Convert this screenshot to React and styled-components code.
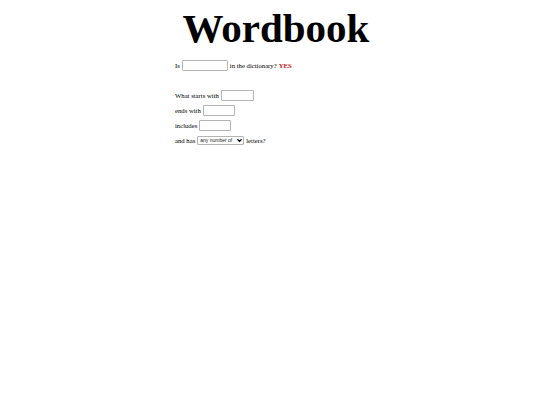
import React from "react";
import styled, { createGlobalStyle } from "styled-components";

const Global = createGlobalStyle`
  html, body {
    margin: 0;
    padding: 0;
    background: #fff;
  }
  body {
    font-family: "Liberation Serif", "Times New Roman", serif;
    color: #000;
  }
`;

const Page = styled.div`
  width: 190px;
  margin: 0 auto;
  font-size: 6.7px;
`;

const Title = styled.h1`
  margin: 0 -50px;
  padding: 4px 0 0 12px;
  font-size: 41px;
  line-height: 48px;
  font-weight: bold;
  text-align: center;
  white-space: nowrap;
`;

const Row = styled.div`
  display: flex;
  align-items: center;
  gap: 2px;
  height: 15px;
  margin-top: ${(p) => p.$top || 0}px;
`;

const Field = styled.input`
  box-sizing: border-box;
  width: ${(p) => p.$w || 46}px;
  height: 11px;
  border: 1px solid #b5b5b5;
  border-radius: 1px;
  padding: 0;
  margin: 0;
  font-size: 6.7px;
`;

const SelectWrap = styled.span`
  position: relative;
  display: inline-flex;
`;

const Select = styled.select`
  appearance: none;
  box-sizing: border-box;
  width: 47px;
  height: 9px;
  font-size: 5px;
  line-height: 7px;
  font-family: "Liberation Sans", Arial, sans-serif;
  color: #222;
  padding: 0 0 0 2px;
  margin: 0;
  background: #fff;
  border: 1px solid #b5b5b5;
  border-radius: 1px;
`;

const Chevron = styled.svg`
  position: absolute;
  right: 2px;
  top: 3px;
  width: 5px;
  height: 3px;
  pointer-events: none;
`;

const Yes = styled.span`
  color: #d01010;
  font-weight: bold;
`;

export default function App() {
  return (
    <>
      <Global />
      <Page>
        <Title>Wordbook</Title>
        <Row $top={6}>
          Is <Field /> in the dictionary? <Yes>YES</Yes>
        </Row>
        <Row $top={15}>
          What starts with <Field $w={33} />
        </Row>
        <Row>
          ends with <Field $w={32} />
        </Row>
        <Row>
          includes <Field $w={32} />
        </Row>
        <Row>
          and has
          <SelectWrap>
            <Select defaultValue="any">
              <option value="any">any number of</option>
            </Select>
            <Chevron viewBox="0 0 5 3">
              <path d="M0.5 0.3 L2.5 2.4 L4.5 0.3" fill="none" stroke="#000" strokeWidth="1.3" />
            </Chevron>
          </SelectWrap>
          letters?
        </Row>
      </Page>
    </>
  );
}
